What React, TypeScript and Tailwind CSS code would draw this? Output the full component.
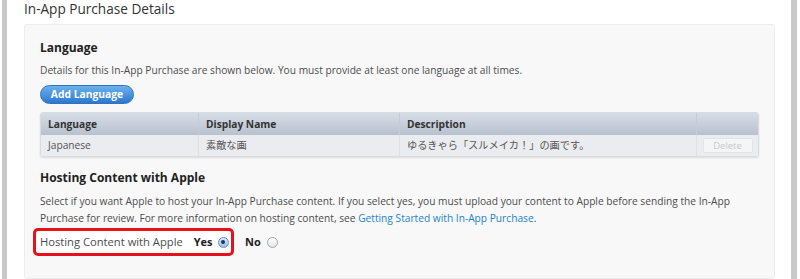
import React from "react"

const Radio = ({ checked }: { checked?: boolean }) => (
	<span
		className={
			checked
				? "flex size-[11px] items-center justify-center rounded-full border border-[#6b8fbd] bg-gradient-to-b from-[#dcebf9] to-[#94c0ea]"
				: "flex size-[11px] items-center justify-center rounded-full border border-[#a5a5a5] bg-gradient-to-b from-white to-[#e6e6e6]"
		}
	>
		{checked && <span className="size-[4px] rounded-full bg-[#1d3558]" />}
	</span>
)

export default function App() {
	return (
		<div className="flex h-[279px] w-[800px] overflow-hidden bg-white font-['Open_Sans','Noto_Sans_CJK_JP',sans-serif] text-[#4d4d4d]">
			<div className="ml-[2px] w-[5px] shrink-0 bg-[#c9c9c9]" />

			<div className="flex flex-1 flex-col pl-[17px] pr-[16px]">
				<h1 className="h-[24px] pt-[1px] text-[13.6px] leading-[16px] text-[#333]">In-App Purchase Details</h1>

				<div className="flex flex-1 flex-col rounded-[3px] border border-[#ececec] bg-[#f8f8f8] px-[15px] pt-[16px]">
					<h2 className="text-[12px] font-bold leading-[14px] text-[#222]">Language</h2>
					<p className="mt-[8px] text-[10.2px] leading-[14px]">
						Details for this In-App Purchase are shown below. You must provide at least one language at all times.
					</p>

					<button className="mt-[8px] h-[19px] w-[94px] rounded-full border border-[#2f73bd] bg-gradient-to-b from-[#6cb1ec] to-[#2b78cf] text-[10.3px] font-bold leading-[17px] text-white">
						Add Language
					</button>

					<div className="mt-[8px] overflow-hidden rounded-[3px] border border-[#d8dbe0] shadow-[0_1px_2px_rgba(0,0,0,0.12)]">
						<div className="grid h-[22px] grid-cols-[158px_201px_297px_1fr] bg-gradient-to-b from-[#d7dde6] to-[#b8c1ce] text-[10.2px] font-bold leading-[22px] text-[#333]">
							<div className="border-r border-[#c6ccd5] px-[7px]">Language</div>
							<div className="border-r border-[#c6ccd5] px-[7px]">Display Name</div>
							<div className="border-r border-[#c6ccd5] px-[7px]">Description</div>
							<div />
						</div>
						<div className="grid h-[21px] grid-cols-[158px_201px_297px_1fr] bg-[#eaecf0] text-[10.2px] leading-[21px] text-[#555]">
							<div className="border-r border-[#dde0e5] px-[7px]">Japanese</div>
							<div className="border-r border-[#dde0e5] px-[7px]">素敵な画</div>
							<div className="border-r border-[#dde0e5] px-[7px]">ゆるきゃら「スルメイカ！」の画です。</div>
							<div className="flex items-center justify-center">
								<span className="h-[15px] w-[50px] rounded-[2px] border border-[#e2e4e8] bg-[#f4f5f7] text-center text-[9.5px] leading-[13px] text-[#c8c8c8]">
									Delete
								</span>
							</div>
						</div>
					</div>

					<h2 className="mt-[14px] text-[12px] font-bold leading-[14px] text-[#222]">Hosting Content with Apple</h2>
					<p className="mt-[8px] text-[10.2px] leading-[17px]">
						Select if you want Apple to host your In-App Purchase content. If you select yes, you must upload your content to Apple before sending the In-App
						<br />
						Purchase for review. For more information on hosting content, see{" "}
						<a className="text-[#2484c8]">Getting Started with In-App Purchase</a>.
					</p>

					<div className="ml-[-7px] mt-[1px] flex items-center">
						<div className="flex h-[28px] w-[201px] items-center rounded-[5px] border-[3px] border-[#e8101a] bg-white pl-[4px]">
							<span className="text-[11.2px]">Hosting Content with Apple</span>
							<span className="ml-[11px] flex items-center gap-[5px] text-[11px] font-bold text-[#222]">
								Yes <Radio checked />
							</span>
						</div>
						<span className="ml-[11px] flex items-center gap-[6px] text-[11px] font-bold text-[#222]">
							No <Radio />
						</span>
					</div>
				</div>
			</div>

			<div className="w-[6px] shrink-0 bg-[#c9c9c9]" />
			<div className="w-[3px] shrink-0" />
		</div>
	)
}
